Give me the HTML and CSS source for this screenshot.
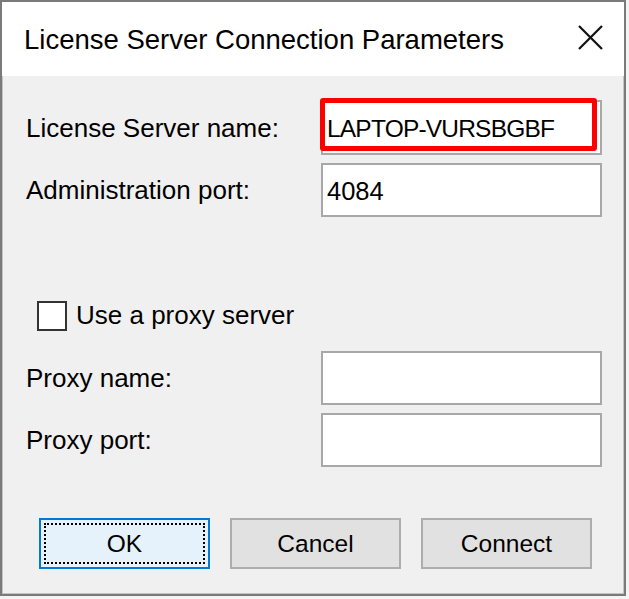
FILE: index.html
```html
<!DOCTYPE html>
<html>
<head>
<meta charset="utf-8">
<link rel="stylesheet" href="styles.css">
</head>
<body>
<div class="window">
  <div class="titlebar">
    <span class="title">License Server Connection Parameters</span>
    <svg class="close" width="25" height="25" viewBox="0 0 25 25"><path d="M1 1 L24 24 M24 1 L1 24" stroke="#111" stroke-width="2.2" fill="none"/></svg>
  </div>
  <div class="body">
    <div class="row">
      <span class="label">License Server name:</span>
      <div class="field first">
        <span class="value narrow">LAPTOP-VURSBGBF</span>
        <div class="highlight"></div>
      </div>
    </div>
    <div class="row second">
      <span class="label">Administration port:</span>
      <div class="field"><span class="value">4084</span></div>
    </div>
    <div class="check-row">
      <span class="checkbox"></span>
      <span class="label">Use a proxy server</span>
    </div>
    <div class="row">
      <span class="label">Proxy name:</span>
      <div class="field"></div>
    </div>
    <div class="row second">
      <span class="label">Proxy port:</span>
      <div class="field"></div>
    </div>
    <div class="buttons">
      <div class="btn default">OK</div>
      <div class="btn">Cancel</div>
      <div class="btn">Connect</div>
    </div>
  </div>
</div>
</body>
</html>
```

FILE: styles.css
```css
html, body {
  margin: 0;
  padding: 0;
  background: #f4f4f4;
}
body {
  font-family: "Liberation Sans", Arial, sans-serif;
  color: #000;
}
.window {
  width: 626px;
  height: 596px;
  box-sizing: border-box;
  border: 2px solid #7a7a7a;
  box-shadow: inset 0 0 0 1px #c4c4c4;
  display: flex;
  flex-direction: column;
  background: #f0f0f0;
}
.titlebar {
  height: 74px;
  background: #fff;
  display: flex;
  align-items: center;
  justify-content: space-between;
  padding: 0 21px 0 22px;
  flex: none;
}
.title {
  font-size: 27.5px;
  position: relative;
  top: 1px;
}
.close {
  display: block;
  margin-top: -4px;
}
.body {
  flex: 1;
  padding: 24px 0 0 24px;
  display: flex;
  flex-direction: column;
}
.row {
  display: flex;
  align-items: center;
}
.row.second {
  margin-top: 8px;
}
.label {
  font-size: 26px;
  line-height: 30px;
}
.row .label {
  width: 295px;
  flex: none;
}
.field {
  position: relative;
  width: 281px;
  height: 54px;
  box-sizing: border-box;
  border: 2px solid #a8a8a8;
  background: #fff;
  display: flex;
  align-items: center;
  padding-left: 4px;
}
.field.first {
  height: 55px;
}
.value {
  font-size: 25.5px;
  line-height: 30px;
  position: relative;
  top: 1px;
}
.value.narrow {
  font-size: 24.5px;
  letter-spacing: -0.8px;
}
.highlight {
  position: absolute;
  left: -3px;
  top: -4px;
  width: 277px;
  height: 53px;
  box-sizing: border-box;
  border: 5px solid #ff0000;
  border-radius: 3px;
}
.check-row {
  display: flex;
  align-items: center;
  margin: 84px 0 20px 11px;
  height: 30px;
  gap: 9px;
}
.checkbox {
  width: 30px;
  height: 30px;
  box-sizing: border-box;
  border: 2px solid #333;
  background: #fff;
  flex: none;
}
.check-row .label {
  position: relative;
  top: -1px;
}
.buttons {
  display: flex;
  gap: 20px;
  margin: 51px 0 0 13px;
}
.btn {
  width: 171px;
  height: 51px;
  box-sizing: border-box;
  border: 2px solid #adadad;
  background: #e1e1e1;
  display: flex;
  align-items: center;
  justify-content: center;
  font-size: 24.5px;
}
.btn.default {
  border-color: #0078d7;
  background: #e5f1fb;
  outline: 2px dotted #000;
  outline-offset: -7px;
}
```
